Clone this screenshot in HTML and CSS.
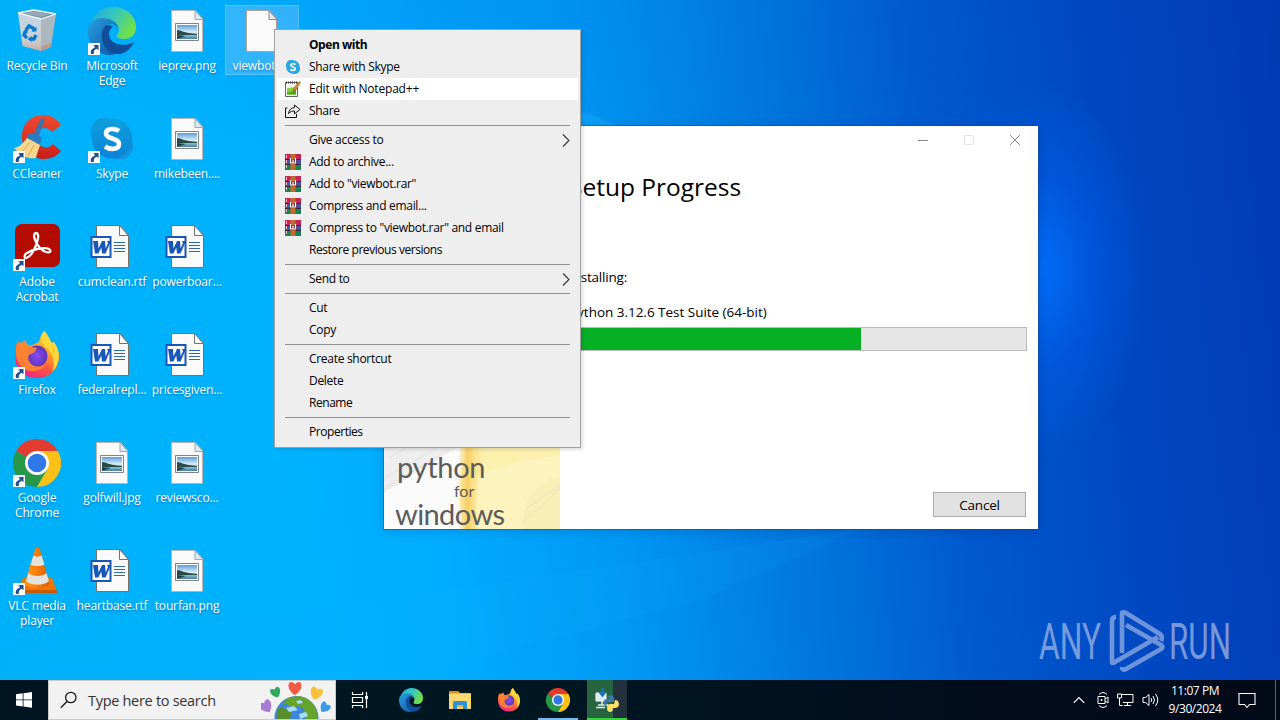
FILE: index.html
```html
<!DOCTYPE html>
<html lang="en">
<head>
<meta charset="utf-8">
<title>Desktop</title>
<link rel="stylesheet" href="styles.css">
</head>
<body>
<svg class="defs" width="0" height="0" aria-hidden="true">
  <defs>
    <linearGradient id="edgeBlue" x1="0" y1="0" x2="1" y2="1"><stop offset="0" stop-color="#2a9fe0"/><stop offset="1" stop-color="#0b4fa0"/></linearGradient>
    <linearGradient id="edgeGreen" x1="0" y1="0" x2="1" y2=".5"><stop offset="0" stop-color="#1fa8dc"/><stop offset=".5" stop-color="#34c6c0"/><stop offset="1" stop-color="#6fe04a"/></linearGradient>
    <linearGradient id="ffBody" x1=".9" y1="0" x2=".3" y2="1"><stop offset="0" stop-color="#fff14f"/><stop offset=".35" stop-color="#ffb02e"/><stop offset=".65" stop-color="#ff5b3a"/><stop offset="1" stop-color="#f0208a"/></linearGradient>
    <radialGradient id="ffCore"><stop offset="0" stop-color="#8c4df5"/><stop offset="1" stop-color="#5b35b8"/></radialGradient>
    <linearGradient id="skype" x1="0" y1="0" x2="0" y2="1"><stop offset="0" stop-color="#0fa0dc"/><stop offset="1" stop-color="#0a82d8"/></linearGradient>
    <linearGradient id="cone" x1="0" y1="0" x2="1" y2="0"><stop offset="0" stop-color="#ff9a1a"/><stop offset=".5" stop-color="#fb7c0a"/><stop offset="1" stop-color="#d65c00"/></linearGradient>
    <linearGradient id="bin" x1="0" y1="0" x2="0" y2="1"><stop offset="0" stop-color="#c3d6e2"/><stop offset=".7" stop-color="#c9d0d5"/><stop offset="1" stop-color="#c9ada0"/></linearGradient>
    <linearGradient id="photo" x1="0" y1="0" x2="0" y2="1"><stop offset="0" stop-color="#5b9edb"/><stop offset=".5" stop-color="#d8ecf5"/><stop offset=".75" stop-color="#8fb8cc"/><stop offset="1" stop-color="#3d7da0"/></linearGradient>
    <linearGradient id="cc" x1="0" y1="0" x2="0" y2="1"><stop offset="0" stop-color="#f04a30"/><stop offset="1" stop-color="#c81e1a"/></linearGradient>

    <symbol id="i-shortcut" viewBox="0 0 12 12"><path fill="#fff" d="M0 0h12v12H0z"/><path d="M3 11C2 7.500 4 5.500 6.500 5V2.800L5 2h5.500v5.300L8.800 5.800C6.500 6.500 5.500 8 5.800 11z" fill="#1d4f91"/></symbol>
    <symbol id="i-bin" viewBox="0 0 48 48"><path d="M5 6l23 5v33L9.500 39z" fill="url(#bin)"/><path d="M28 11l15-4-5 33-10 4z" fill="#adb7be"/><path d="M28 39l10.500-3-.5 4-10 4z" fill="#b99c90"/><path d="M5 6l16-3 22 4-15 5z" fill="#7a95a6" stroke="#eef6fa" stroke-width="1.300"/><path d="M10 6.500l12-2 14 2.500-8 3z" fill="#94a9b5"/><g fill="none" stroke="#0878d0" stroke-width="3.400"><path d="M13 23l3-4 4 2 1.500 3M23 28l-2 4h-4M14 31l-3-3 2-4"/></g><path d="M18.500 24.500h5v-5zM18.500 29v6l-4-3zM9.500 25.500h5.500l-2-4z" fill="#0878d0"/></symbol>
    <symbol id="i-edge" viewBox="0 0 48 48"><path d="M2 25C2 11 12 0 25 0c13 0 23 9 23 20 0 8-5 12-12 12-4 0-6-1-7-2-1-2 2-3 2-7C31 15 22 12 16 12 8 12 2 18 2 25z" fill="url(#edgeGreen)"/><path d="M0 24c0-8 7-13 14-13 9 0 16 4 16 11-1-3-4-5-7-5-6 0-8 5-8 9 0 12 10 18 20 15-3 4-8 7-13 7C9 48 0 37 0 24z" fill="url(#edgeBlue)"/><path d="M17 19c-8 9-1 29 15 28 6-1 11-6 13-10 1-2 0-2-1-1-13 5-23-1-23-9 0-4 2-6 4-7-3-3-6-2-8-1z" fill="#104d9b"/></symbol>
    <symbol id="i-photo" viewBox="0 0 48 48"><path d="M8.500 3.500h24l7 8v33h-31z" fill="#fafafa" stroke="#b9b4b0"/><path d="M32 3.500v9h8z" fill="#dcebf3" stroke="#9aa"/><path d="M12.500 16.500h23v17h-23z" fill="#fff" stroke="#7e8488"/><path d="M14 18h20v14H14z" fill="url(#photo)"/><path d="M14 23c4 0 6 3 20 4v1H14z" fill="#274c48"/><path d="M14 28l9 1-9 3z" fill="#244"/></symbol>
    <symbol id="i-page" viewBox="0 0 48 48"><path d="M8.500 3.500h23l7 8v33h-30z" fill="#fafafa" stroke="#a9a29c"/><path d="M31 3.500v9h8z" fill="#e5e9eb" stroke="#88847e"/></symbol>
    <symbol id="i-word" viewBox="0 0 48 48"><path d="M8.500 2.500h23l9 10v32h-32z" fill="#fafafa" stroke="#77716c"/><path d="M31.500 2.500v10h9z" fill="#fff" stroke="#77716c"/><path d="M2.500 13h21v22h-21z" fill="#1857b8"/><path d="M4.500 15h17v18h-17z" fill="#fff"/><path d="M5 18h5l.5 7.500L14 18h3l.7 7.500L20 20l-1-2h4l-5.500 12.500H14l-.7-6-3 6H7z" fill="#1857b8"/><path d="M26 19.500h11M26 22.500h11M26 25.500h11M26 28.500h11" stroke="#2f6aa8"/></symbol>
    <symbol id="i-ccleaner" viewBox="0 0 48 48"><path d="M48 10C43 3 37 0 31 0 17 0 9 9 9 22s9 22 22 22c7 0 13-3 17-8l-8-7c-3 3-6 4-9 3-5-1-8-5-8-10s3-9 8-9c3 0 6 1 8 4z" fill="url(#cc)"/><path d="M28 3l4 1-8 22-6-1z" fill="#3b74a8"/><path d="M15 20c3-3 10-1 14 3l-2 6-14-4z" fill="#2b7bc0"/><path d="M14 23l13 7c-1 4-3 8-4 13-6 1-13 0-22-10 6-1 9-5 13-10z" fill="#f7d68d"/><path d="M17 27l-8 10M21 30l-6 11" stroke="#d5a95c" fill="none"/></symbol>
    <symbol id="i-skype" viewBox="0 0 48 48"><rect x="3" y="3" width="28" height="29" rx="13" fill="#0f98dc"/><rect x="17" y="15" width="28" height="29" rx="13" fill="#1590dc"/><circle cx="24" cy="23.500" r="20" fill="url(#skype)"/><path d="M31 16c-4-3-13-3-13 2.500 0 6 13 4 13 10.500 0 6-9 6-14 2.500" fill="none" stroke="#fff" stroke-width="4.600"/></symbol>
    <symbol id="i-acrobat" viewBox="0 0 48 48"><rect x="2" y="1" width="45" height="43" rx="7" fill="#b30b00"/><path d="M12 32c-2 5 4 4 9-5 4-8 6-17 2-17s-1 10 4 15c6 6 12 5 10 2-2-4-17-1-23 3-1 1-2 1-2 2z" fill="none" stroke="#fff" stroke-width="2.300"/></symbol>
    <symbol id="i-firefox" viewBox="0 0 48 48"><path d="M3 14l3-4 1 4 5-4c1 3 3 5 7 4l7-3c1-4 2-8 5-11 3 6 6 7 7 12l3-1c3 4 5 9 5 14 0 13-9 22-22 22S2 38 2 25c0-4 0-7 1-11z" fill="url(#ffBody)"/><circle cx="24" cy="25" r="10.500" fill="url(#ffCore)"/><path d="M5 12c5 0 6-3 8-3 0 6 5 7 11 8l-2 4-6 3c-1 2-1 4 0 6 3 6 10 7 17 4-5 7-19 9-26 0C2 27 2 18 5 12z" fill="#ff872f" opacity=".9"/><path d="M32 0c5 8 9 14 8 24 2-4 1-9-1-14 9 9 9 22 0 31 4-10 1-18-5-24-6-5-7-8-2-17z" fill="#ffd83a"/></symbol>
    <symbol id="i-chrome" viewBox="0 0 48 48"><path d="M24 24L3.200 12A24 24 0 0 1 44.800 12z" fill="#e33b2e"/><path d="M3.200 12A24 24 0 0 0 24 48L34.400 30 24 24z" fill="#279847"/><path d="M24 12h20.800A24 24 0 0 1 24 48l10.400-18z" fill="#fbc116"/><circle cx="24" cy="24" r="12" fill="#fff"/><circle cx="24" cy="24" r="9.300" fill="#3077e8"/></symbol>
    <symbol id="i-vlc" viewBox="0 0 48 48"><path d="M10 31h29l5 14H5z" fill="#ef7600"/><path d="M5 43h38.500l.5 3H5z" fill="#c85a00"/><path d="M22.500 1h4l10 36c-5 6-20 6-25 0z" fill="url(#cone)"/><path d="M20.500 8.500c2 1.500 5 1.500 8 0l3 9c-4 2-10 2-14 0zM15.500 26c4 4 14 4 18 0l2.500 8c-5 5-18 5-23 0z" fill="#e4e2dd"/></symbol>
    <symbol id="i-rar" viewBox="0 0 16 16"><path fill="#c42456" d="M0 0h16v5H0z"/><path fill="#4054a8" d="M0 5h16v6H0z"/><path fill="#168452" d="M0 11h16v5H0z"/><path d="M0 5.500h16M0 10.500h16" stroke="#3a213c"/><path d="M1.500 1v14" stroke="#f1b8c2" stroke-dasharray="3 2"/><path fill="#c06a2c" d="M5.500 0h5v16h-5z"/><path d="M4.500 5h7v5h-7z" fill="#712033"/><path d="M5.500 4v5h5V4M8 5.500V9" fill="none" stroke="#fff" stroke-width="1.200"/></symbol>
    <symbol id="i-chevron" viewBox="0 0 8 13"><path d="M1 .5l6 6-6 6" fill="none" stroke="#333" stroke-width="1.100"/></symbol>
  </defs>
</svg>

<div class="screen">
  <main class="wallpaper">
    <svg class="rays" viewBox="0 0 1280 680" preserveAspectRatio="none" aria-hidden="true"><path d="M540 102Q590 112 622 128H540z" fill="#23b5ff" opacity=".35"/><path d="M0 680V650L384 600 860 529 700 600 400 680z" fill="#10b4ff" opacity=".1"/></svg>

    <div class="icons">
      <div class="tile"><div class="pic"><svg class="big"><use href="#i-bin"/></svg></div><span>Recycle Bin</span></div>
      <div class="tile"><div class="pic"><svg class="big"><use href="#i-edge"/></svg><svg class="link"><use href="#i-shortcut"/></svg></div><span>Microsoft<br>Edge</span></div>
      <div class="tile"><div class="pic"><svg class="big"><use href="#i-photo"/></svg></div><span>ieprev.png</span></div>
      <div class="tile picked"><div class="pic"><svg class="big"><use href="#i-page"/></svg></div><span>viewbot.py</span></div>

      <div class="tile"><div class="pic"><svg class="big"><use href="#i-ccleaner"/></svg><svg class="link"><use href="#i-shortcut"/></svg></div><span>CCleaner</span></div>
      <div class="tile"><div class="pic"><svg class="big"><use href="#i-skype"/></svg><svg class="link"><use href="#i-shortcut"/></svg></div><span>Skype</span></div>
      <div class="tile"><div class="pic"><svg class="big"><use href="#i-photo"/></svg></div><span>mikebeen....</span></div>
      <div class="tile"></div>

      <div class="tile"><div class="pic"><svg class="big"><use href="#i-acrobat"/></svg><svg class="link"><use href="#i-shortcut"/></svg></div><span>Adobe<br>Acrobat</span></div>
      <div class="tile"><div class="pic"><svg class="big"><use href="#i-word"/></svg></div><span>cumclean.rtf</span></div>
      <div class="tile"><div class="pic"><svg class="big"><use href="#i-word"/></svg></div><span>powerboar...</span></div>
      <div class="tile"></div>

      <div class="tile"><div class="pic"><svg class="big"><use href="#i-firefox"/></svg><svg class="link"><use href="#i-shortcut"/></svg></div><span>Firefox</span></div>
      <div class="tile"><div class="pic"><svg class="big"><use href="#i-word"/></svg></div><span>federalrepl...</span></div>
      <div class="tile"><div class="pic"><svg class="big"><use href="#i-word"/></svg></div><span>pricesgiven...</span></div>
      <div class="tile"></div>

      <div class="tile"><div class="pic"><svg class="big"><use href="#i-chrome"/></svg><svg class="link"><use href="#i-shortcut"/></svg></div><span>Google<br>Chrome</span></div>
      <div class="tile"><div class="pic"><svg class="big"><use href="#i-photo"/></svg></div><span>golfwill.jpg</span></div>
      <div class="tile"><div class="pic"><svg class="big"><use href="#i-photo"/></svg></div><span>reviewsco...</span></div>
      <div class="tile"></div>

      <div class="tile"><div class="pic"><svg class="big"><use href="#i-vlc"/></svg><svg class="link"><use href="#i-shortcut"/></svg></div><span>VLC media<br>player</span></div>
      <div class="tile"><div class="pic"><svg class="big"><use href="#i-word"/></svg></div><span>heartbase.rtf</span></div>
      <div class="tile"><div class="pic"><svg class="big"><use href="#i-photo"/></svg></div><span>tourfan.png</span></div>
      <div class="tile"></div>
    </div>

    <section class="installer">
      <aside class="banner">
        <svg class="swirl" viewBox="0 0 176 82" preserveAspectRatio="none"><defs><linearGradient id="gold" x1="0" x2="1" y1="0" y2="0"><stop offset="0" stop-color="#f9cf62" stop-opacity="0"/><stop offset=".35" stop-color="#f9cf62"/><stop offset="1" stop-color="#fdf0ae" stop-opacity="0"/></linearGradient></defs><path d="M0 0h74L38 22 0 46z" fill="#eeeeef"/><path d="M84 0Q70 40 80 82h96V0z" fill="#fdf4bd"/><path d="M84 0h92v8Q110 16 80 36z" fill="#fcec9f" opacity=".5"/><path d="M76 0h28q-16 40-10 82H76q-6-40 0-82z" fill="url(#gold)"/><path d="M176 30q-36 4-38 52h38z" fill="#f6ecb4" opacity=".8"/><path d="M0 32L54 0M0 42L66 2M6 10l18-10M138 76l38-34M142 62l34-24" stroke="#dcd9c8" opacity=".5"/></svg>
        <div class="brand"><b class="py">python</b><b class="for">for</b><b class="win">windows</b></div>
      </aside>
      <div class="body">
        <div class="controls">
          <svg width="12" height="12" viewBox="0 0 12 12"><path d="M1 6.500h10" stroke="#888"/></svg>
          <svg width="12" height="12" viewBox="0 0 12 12"><path d="M1.500 1.500h9v9h-9z" fill="none" stroke="#e6e6e6"/></svg>
          <svg width="12" height="12" viewBox="0 0 12 12"><path d="M1 1l10 10M11 1L1 11" stroke="#888" fill="none"/></svg>
        </div>
        <h1>Setup Progress</h1>
        <p class="state">Installing:</p>
        <p class="package">Python 3.12.6 Test Suite (64-bit)</p>
        <div class="bar"><div class="fill"></div></div>
        <div class="actions"><button class="cancel">Cancel</button></div>
      </div>
    </section>

    <svg class="mark" width="210" height="70" viewBox="0 0 210 70"><g fill="#aebfe8" opacity=".68"><text x="1" y="50" textLength="62" lengthAdjust="spacingAndGlyphs">ANY</text><text x="131" y="50" textLength="62" lengthAdjust="spacingAndGlyphs">RUN</text></g><g fill="none" stroke="#a9bce8" stroke-width="4.600" opacity=".65" stroke-linejoin="round"><path d="M78 8c-3 0-4 2-4 4v41q0 2 3 0L120 28"/><path d="M84 44V5q0-3 4-1l34 21q3 3 1 7"/><path d="M88 16l35 20q3 2 0 4L88 60q-4 2-4-2"/></g></svg>

    <nav class="menu">
      <div class="item strong"><i></i><span>Open with</span></div>
      <div class="item"><i><svg class="ico" viewBox="0 0 16 16"><rect x="1" y="1" width="10" height="10" rx="5" fill="#2aa7e3"/><rect x="5" y="5" width="10" height="10" rx="5" fill="#2aa7e3"/><circle cx="8" cy="8" r="6.800" fill="#2aa7e3"/><path d="M10.500 5.500C9 4.300 5.800 4.400 5.800 6.300c0 2.100 4.500 1.400 4.500 3.500 0 2-3.500 2-5 .6" fill="none" stroke="#fff" stroke-width="1.600"/></svg></i><span>Share with Skype</span></div>
      <div class="item hot"><i><svg class="ico" viewBox="0 0 16 16"><path d="M.5 1.500h12v14H.5z" fill="#f5f7ee" stroke="#5f6a68"/><path d="M1 1.500h11" stroke="#333" stroke-dasharray="1 1" stroke-width="2"/><path d="M2 7l9-1v7.500H2z" fill="#8bd13f"/><path d="M2 11q5 1 9-3v5.500H2z" fill="#4ca51f"/><path d="M8 10l1-3 5-6.500 1.500 1L11 9z" fill="#d58b37" stroke="#8a4d1a" stroke-width=".5"/></svg></i><span>Edit with Notepad++</span></div>
      <div class="item"><i><svg class="ico" viewBox="0 0 16 16"><path d="M2.500 5h-2v9.500h11V11M9.500 2v2.500C6 5 4 7 3.500 10.500c2-2 3.500-2.500 6-2.500v2.800L15 6.500z" fill="none" stroke="#111"/></svg></i><span>Share</span></div>
      <hr>
      <div class="item"><i></i><span>Give access to</span><svg class="more"><use href="#i-chevron"/></svg></div>
      <div class="item"><i><svg class="ico"><use href="#i-rar"/></svg></i><span>Add to archive...</span></div>
      <div class="item"><i><svg class="ico"><use href="#i-rar"/></svg></i><span>Add to "viewbot.rar"</span></div>
      <div class="item"><i><svg class="ico"><use href="#i-rar"/></svg></i><span>Compress and email...</span></div>
      <div class="item"><i><svg class="ico"><use href="#i-rar"/></svg></i><span>Compress to "viewbot.rar" and email</span></div>
      <div class="item tight"><i></i><span>Restore previous versions</span></div>
      <hr>
      <div class="item"><i></i><span>Send to</span><svg class="more"><use href="#i-chevron"/></svg></div>
      <hr>
      <div class="item"><i></i><span>Cut</span></div>
      <div class="item"><i></i><span>Copy</span></div>
      <hr>
      <div class="item"><i></i><span>Create shortcut</span></div>
      <div class="item"><i></i><span>Delete</span></div>
      <div class="item tight"><i></i><span>Rename</span></div>
      <hr>
      <div class="item tight"><i></i><span>Properties</span></div>
    </nav>
  </main>

  <footer class="taskbar">
    <div class="start"><svg width="16" height="16" viewBox="0 0 16 16"><path d="M0 2.200l6.700-.9v6.200H0zM7.500 1.200L16 0v7.500H7.500zM0 8.300h6.700v6.200L0 13.600zM7.500 8.300H16v7.500l-8.500-1.200z" fill="#fff"/></svg></div>
    <div class="search">
      <svg width="18" height="18" viewBox="0 0 18 18"><circle cx="10.800" cy="6.500" r="5.200" fill="none" stroke="#1a1a1a" stroke-width="1.300"/><path d="M7 10.500L.8 16.700" stroke="#1a1a1a" stroke-width="1.400"/></svg>
      <span>Type here to search</span>
      <svg class="globe" width="70" height="38" viewBox="0 0 70 38"><defs><path id="heart" d="M0 5.500C-8 0-6-6.500-3-6Q-.9-5.500 0-4 .9-5.500 3-6C6-6.500 8 0 0 5.500z"/></defs><circle cx="35.500" cy="37" r="22" fill="#3d86e0"/><path d="M31 16c8-2 14 0 18 4 5 4 8 10 8 18H45l-4-6 3-3-6-4-7 2-5-4-4 1c1-4 4-7 9-8z" fill="#64a32c"/><path d="M18 26l7 2 6 4-2 6H16c-1-4 0-8 2-12z" fill="#568f2a"/><path d="M25 27l8-2 4 4-9 2zM38 33l7-2 2 4-8 3zM35 20l5-1 2 3-5 1z" fill="#a8dafa"/><use href="#heart" transform="translate(34 8) scale(1.150)" fill="#f25b43"/><use href="#heart" transform="translate(15 12) rotate(-22) scale(.9)" fill="#2faa5c"/><use href="#heart" transform="translate(55 13) rotate(18) scale(1.100)" fill="#f8c23c"/><use href="#heart" transform="translate(5.500 26) rotate(-32) scale(1.100)" fill="#a77ad4"/><use href="#heart" transform="translate(63.500 27) rotate(35) scale(.9)" fill="#3c9be8"/></svg>
    </div>
    <div class="apps">
      <div class="app view"><svg width="18" height="16" viewBox="0 0 18 16"><path d="M1.500 0v2.500h10V0M1.500 16v-2.500h10V16M1.500 5.500h10v5h-10zM15.500 0v16" fill="none" stroke="#fff" stroke-width="1.200"/><path d="M14 4h3v3h-3z" fill="#fff"/></svg></div>
      <div class="app"><svg width="24" height="24"><use href="#i-edge"/></svg></div>
      <div class="app"><svg width="24" height="24" viewBox="0 0 24 24"><path d="M1 3h9l2 2h11v16H1z" fill="#f3b73a"/><path d="M1 6h22v15H1z" fill="#fbd770"/><path d="M1 3h9l1 2H1z" fill="#dc8e12"/><path d="M5 21v-6q0-2 2-2h10q2 0 2 2v6h-4v-4H9v4z" fill="#2f91d4"/><path d="M9 17h6v2H9z" fill="#e9b13d"/></svg></div>
      <div class="app"><svg width="24" height="24"><use href="#i-firefox"/></svg></div>
      <div class="app running"><svg width="24" height="24"><use href="#i-chrome"/></svg></div>
      <div class="app setup"><svg width="24" height="24" viewBox="0 0 24 24"><path d="M1 5h10v8H1z" fill="#dce9f4" stroke="#fff"/><path d="M3 17h10M7 13v4M1 19.500h9" stroke="#e8eef3" stroke-width="1.600"/><path d="M7.500 0v6M4.500 4l3 3.500 3-3.500" fill="none" stroke="#1773b8" stroke-width="2.200"/><path d="M12 9q4-3 7 0v5h-5q-3 0-3 4-3-1-2-5 0-2 3-2h4z" fill="#3b79ad"/><path d="M20 12q4 0 4 5-1 3-3 3h-3q0 4-3 4t-3-4q0-4 3-4h4z" fill="#ffdf69"/></svg></div>
    </div>
    <div class="tray">
      <svg width="12" height="8" viewBox="0 0 12 8"><path d="M.8 6.800L6 1.500l5.200 5.300" fill="none" stroke="#fff" stroke-width="1.200"/></svg>
      <svg width="12" height="18" viewBox="0 0 12 18"><path d="M2 3.500Q6-.5 10 3.500M2 14.500q4 4 8 0M1 5.500h7v7H1zM8 8l3-2v6L8 10" fill="none" stroke="#fff"/><circle cx="4.500" cy="9" r="1" fill="#fff"/></svg>
      <svg width="17" height="14" viewBox="0 0 17 14"><path d="M5 1.500h11v8H6M10.500 9.500v3M7 12.500h7M.5 1h4v4h-4zM2.500 5v7.500h3" fill="none" stroke="#fff"/></svg>
      <svg width="17" height="14" viewBox="0 0 17 14"><path d="M1 4.500h2.500L7 1.500v11L3.500 9.500H1zM9 5q1.500 2 0 4M11 3q3 4 0 8M13.500 1q4.500 6 0 12" fill="none" stroke="#fff"/></svg>
      <div class="clock"><span>11:07 PM</span><span>9/30/2024</span></div>
      <svg width="18" height="17" viewBox="0 0 18 17"><path d="M1 1.500h16v11h-5.500L9 15.500l-2.500-3H1z" fill="none" stroke="#fff" stroke-width="1.100"/></svg>
      <div class="peek"></div>
    </div>
  </footer>
</div>
</body>
</html>
```
FILE: styles.css
```css
* { box-sizing: border-box; }
body { margin: 0; font-family: "Open Sans", "Noto Sans", sans-serif; }
.defs { position: absolute; }
.screen { width: 1280px; height: 720px; overflow: hidden; display: flex; flex-direction: column; }

.wallpaper {
  position: relative; height: 680px; flex: none;
  background:
    radial-gradient(ellipse 110px 190px at 1040px 270px, rgba(0, 112, 255, .9), rgba(0, 100, 245, .4) 50%, transparent),
    radial-gradient(ellipse 420px 200px at 430px 0, rgba(0, 118, 230, .25), transparent),
    linear-gradient(84deg, #00b0f8 0, #00b3ff 22%, #00acff 34%, #0098f4 47%, #0078df 60%, #0059ce 73%, #0048c2 85%, #003bb4 100%);
}
.rays { position: absolute; inset: 0; width: 100%; height: 100%; }

.icons { position: relative; width: 300px; padding-top: 7px; display: grid; grid-template-columns: repeat(4, 75px); grid-auto-rows: 108px; }
.tile { display: flex; flex-direction: column; align-items: center; width: 74px; color: #fff; font-size: 12px; line-height: 15px; text-align: center; letter-spacing: -.15px; text-shadow: 0 1px 2px rgba(0, 40, 90, .45); }
.tile span { margin-top: 3px; white-space: nowrap; }
.pic { position: relative; width: 48px; height: 48px; }
.big { display: block; width: 48px; height: 48px; }
.link { position: absolute; left: 0; bottom: 0; width: 12px; height: 12px; }
.picked { margin: -1px 0 0 1px; padding-top: 1px; width: 72px; height: 68px; background: rgba(120, 195, 250, .42); outline: 1px solid rgba(150, 215, 255, .55); }

.installer { position: absolute; left: 384px; top: 126px; width: 654px; height: 403px; display: flex; background: #fff; box-shadow: 0 0 0 1px rgba(20, 70, 130, .45), 0 2px 10px rgba(0, 30, 90, .2); }
.banner { width: 176px; display: flex; flex-direction: column; justify-content: flex-end; position: relative; background: #fbfbfb; }
.swirl { display: block; width: 176px; height: 82px; }
.brand { position: absolute; left: 11px; bottom: 0; width: 120px; display: flex; flex-direction: column; font-family: Lato, sans-serif; color: #5c5c5c; }
.brand b { font-weight: 400; }
.py { font-size: 29px; line-height: 30px; padding-left: 2px; letter-spacing: -.3px; }
.for { font-size: 16px; line-height: 17px; padding-left: 59px; }
.win { font-size: 29px; line-height: 30px; letter-spacing: -.6px; }
.body { flex: 1; padding: 0 11px 12px; display: flex; flex-direction: column; color: #000; }
.controls { display: flex; justify-content: flex-end; gap: 34px; padding: 8px 6px 0 0; height: 40px; }
h1 { margin: 0 0 0 -2px; font-size: 24.500px; font-weight: 400; line-height: 42px; letter-spacing: 0; }
p { margin: 0 0 0 -2px; font-size: 13.500px; line-height: 20px; }
.state { margin-top: 59px; letter-spacing: -.2px; }
.package { margin-top: 15px; letter-spacing: -.02px; }
.bar { margin-top: 5px; height: 24px; border: 1px solid #bcbcbc; background: #e6e6e6; }
.fill { width: 289px; height: 100%; background: #06b025; }
.actions { margin-top: auto; display: flex; justify-content: flex-end; padding-right: 1px; }
.cancel { width: 93px; height: 25px; padding: 0; border: 1px solid #adadad; background: #e1e1e1; font: 13.500px "Open Sans", sans-serif; letter-spacing: -.2px; color: #000; }

.mark { position: absolute; left: 1038px; top: 609px; font-family: Roboto, sans-serif; font-size: 50px; font-weight: 400; }

.menu { position: absolute; left: 274px; top: 29px; width: 307px; height: 419px; padding: 4px 2px; border: 1px solid #a0a0a0; background: #eee; box-shadow: 2px 2px 3px rgba(0, 0, 0, .12); }
.item { height: 22px; display: flex; align-items: center; padding: 0 8px; font-size: 12px; letter-spacing: -.3px; color: #000; white-space: nowrap; }
.item i { width: 24px; display: flex; }
.item span { padding-bottom: 2px; }
.tight { letter-spacing: -.45px; }
.ico { width: 16px; height: 16px; }
.strong { font-weight: 700; letter-spacing: -.45px; }
.hot { background: #fff; letter-spacing: -.2px; }
.more { width: 8px; height: 13px; margin-left: auto; }
.menu hr { height: 1px; margin: 3px 8px; border: 0; background: #919191; }

.taskbar { height: 40px; display: flex; color: #fff; background: linear-gradient(90deg, #00151f, #001722 45%, #020d1c 75%, #030a18); }
.start { width: 48px; display: flex; align-items: center; justify-content: center; }
.search { width: 288px; display: flex; align-items: center; padding-left: 11px; background: #f2f2f2; border: 1px solid #c9c9c9; color: #333; font-size: 14.500px; letter-spacing: -.3px; }
.search span { margin-left: 10px; white-space: nowrap; }
.globe { margin-left: auto; margin-right: 4px; }
.apps { display: flex; padding-left: 4px; gap: 9px; }
.app { width: 40px; height: 40px; display: flex; align-items: center; justify-content: center; }
.view { margin-right: 2px; }
.running { border-bottom: 2px solid #76b9ed; padding-top: 2px; }
.setup { border-bottom: 2px solid #35d43a; padding-top: 2px; background: linear-gradient(90deg, #28643f 65%, #23313d 65%); }
.tray { margin-left: auto; display: flex; align-items: center; gap: 8px; }
.tray > svg:first-child { margin-right: 4px; }
.clock { width: 60px; margin-left: -2px; margin-right: 5px; display: flex; flex-direction: column; align-items: center; font-size: 12px; line-height: 18px; letter-spacing: -.45px; }
.peek { width: 5px; height: 40px; margin-left: 11px; border-left: 1px solid #56616c; }
```
